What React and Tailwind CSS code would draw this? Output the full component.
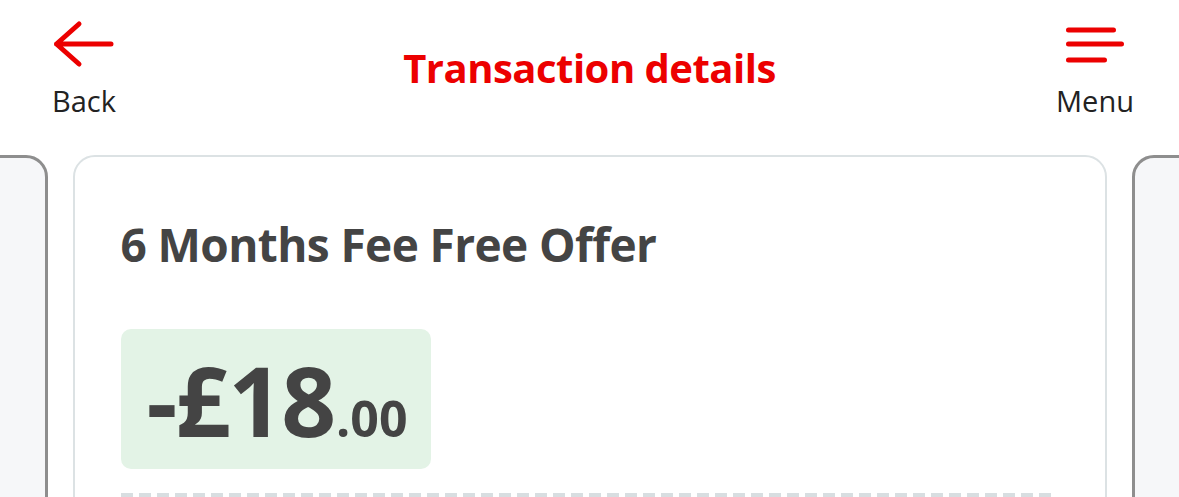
const dashes = Array.from({ length: 52 });

function SideCard() {
  return (
    <div className="w-[1034px] h-[420px] shrink-0 rounded-[22px] border-[3px] border-[#8e8e8e] bg-[#f6f7f9]" />
  );
}

export default function App() {
  return (
    <div
      className="w-[1179px] h-[497px] overflow-hidden bg-white"
      style={{ fontFamily: '"Open Sans", "Noto Sans", sans-serif' }}
    >
      <header className="relative h-[155px] flex items-start justify-between">
        <button className="ml-[49px] mt-[18px] w-[70px] flex flex-col items-center">
          <svg width="70" height="54" viewBox="0 0 70 54" fill="none">
            <path
              d="M7.5 26 H62 M30 6 L7.5 26 L30 46"
              stroke="#ec0000"
              strokeWidth="5"
              strokeLinecap="round"
              strokeLinejoin="round"
            />
          </svg>
          <span className="mt-[14px] text-[29px] leading-none text-[#222]">Back</span>
        </button>

        <h1 className="absolute left-0 right-0 top-[48px] text-center text-[40px] leading-none font-bold tracking-[-0.5px] text-[#ec0000]">
          Transaction details
        </h1>

        <button className="mr-[44px] mt-[18px] w-[80px] flex flex-col items-center">
          <svg width="80" height="50" viewBox="0 0 80 50" fill="none">
            <path
              d="M13.5 12 H58.5 M13.5 26 H66.5 M13.5 42 H49.5"
              stroke="#ec0000"
              strokeWidth="5"
              strokeLinecap="round"
            />
          </svg>
          <span className="mt-[18px] text-[29px] leading-none text-[#222]">Menu</span>
        </button>
      </header>

      <div className="flex justify-center gap-[25px] overflow-hidden">
        <SideCard />
        <div className="w-[1034px] h-[420px] shrink-0 rounded-[22px] border-2 border-[#dce2e4] bg-white pl-[46px] pr-[46px] pt-[64px]">
          <h2 className="text-[46px] leading-none font-bold text-[#444] tracking-[-0.6px]">
            6 Months Fee Free Offer
          </h2>
          <div className="mt-[62px] inline-flex items-baseline rounded-[10px] bg-[#e3f3e6] pl-[26px] pr-[23px] pt-[23px] pb-[21px] text-[#444] font-bold">
            <span className="text-[96px] leading-none tracking-[-2px]">-£18</span>
            <span className="ml-[2px] text-[50px] leading-none font-bold">.00</span>
          </div>
          <div className="mt-[24px] flex gap-[6px]">
            {dashes.map((_, i) => (
              <span key={i} className="w-[12px] h-[8px] shrink-0 rounded-b-[3px] bg-[#d8dee1]" />
            ))}
          </div>
        </div>
        <SideCard />
      </div>
    </div>
  );
}
